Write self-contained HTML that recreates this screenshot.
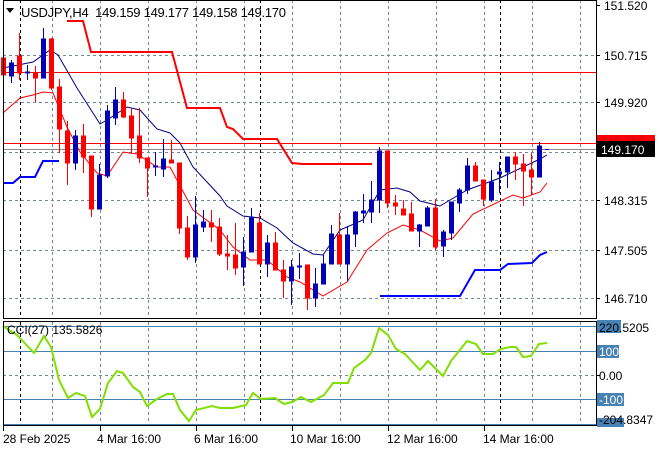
<!DOCTYPE html>
<html><head><meta charset="utf-8"><style>
html,body{margin:0;padding:0;background:#fff;}
svg{display:block;font-family:"Liberation Sans",sans-serif;}
</style></head><body>
<svg width="660" height="450" viewBox="0 0 660 450" xmlns="http://www.w3.org/2000/svg">
<rect width="660" height="450" fill="#fff"/>
<g stroke="#778899" stroke-dasharray="3,3" stroke-width="1">
<line x1="3" y1="55.5" x2="596" y2="55.5"/><line x1="3" y1="102.5" x2="596" y2="102.5"/>
<line x1="3" y1="152.5" x2="596" y2="152.5"/><line x1="3" y1="200.5" x2="596" y2="200.5"/>
<line x1="3" y1="250.5" x2="596" y2="250.5"/><line x1="3" y1="298.5" x2="596" y2="298.5"/>
<line x1="3" y1="375.5" x2="596" y2="375.5"/>
<line x1="52.5" y1="0" x2="52.5" y2="318"/><line x1="100.5" y1="0" x2="100.5" y2="318"/>
<line x1="148.5" y1="0" x2="148.5" y2="318"/><line x1="196.5" y1="0" x2="196.5" y2="318"/>
<line x1="244.5" y1="0" x2="244.5" y2="318"/><line x1="292.5" y1="0" x2="292.5" y2="318"/>
<line x1="340.5" y1="0" x2="340.5" y2="318"/><line x1="388.5" y1="0" x2="388.5" y2="318"/>
<line x1="436.5" y1="0" x2="436.5" y2="318"/><line x1="484.5" y1="0" x2="484.5" y2="318"/>
<line x1="532.5" y1="0" x2="532.5" y2="318"/><line x1="580.5" y1="0" x2="580.5" y2="318"/>
<line x1="52.5" y1="322" x2="52.5" y2="426"/><line x1="100.5" y1="322" x2="100.5" y2="426"/>
<line x1="148.5" y1="322" x2="148.5" y2="426"/><line x1="196.5" y1="322" x2="196.5" y2="426"/>
<line x1="244.5" y1="322" x2="244.5" y2="426"/><line x1="292.5" y1="322" x2="292.5" y2="426"/>
<line x1="340.5" y1="322" x2="340.5" y2="426"/><line x1="388.5" y1="322" x2="388.5" y2="426"/>
<line x1="436.5" y1="322" x2="436.5" y2="426"/><line x1="484.5" y1="322" x2="484.5" y2="426"/>
<line x1="532.5" y1="322" x2="532.5" y2="426"/><line x1="580.5" y1="322" x2="580.5" y2="426"/>
</g>
<g stroke="#000" stroke-dasharray="3,3">
<line x1="20.5" y1="0" x2="20.5" y2="318"/><line x1="260.5" y1="0" x2="260.5" y2="318"/><line x1="500.5" y1="0" x2="500.5" y2="318"/>
<line x1="20.5" y1="322" x2="20.5" y2="426"/><line x1="260.5" y1="322" x2="260.5" y2="426"/><line x1="500.5" y1="322" x2="500.5" y2="426"/>
</g>
<line x1="3" y1="72.5" x2="596" y2="72.5" stroke="#f00"/>
<line x1="3" y1="143.5" x2="596" y2="143.5" stroke="#f00"/>
<line x1="3" y1="149.5" x2="596" y2="149.5" stroke="#8c8c8c"/>
<polyline fill="none" stroke="#f00" stroke-width="2" points="67,21 83,21 91,52 172,52 187,108 220,108 227,127 233,129 243,139 277,139 292,163 302,164 372,164"/>
<polyline fill="none" stroke="#00f" stroke-width="2" points="3,183 13,183 20,177 35,177 43,161 59,161"/>
<polyline fill="none" stroke="#00f" stroke-width="2" points="380,296 460,296 475,270 500,270 508,264 532,263 540,255 547,252"/>
<polyline fill="none" stroke="#000080" points="3,68 33,62 50,50 58,55 77,88 100,124 107,120 127,107 140,110 157,129 170,133 180,143 193,167 220,196 227,206 243,216 260,218 277,228 293,243 313,254 323,255 340,230 363,220 380,190 397,188 410,192 420,201 440,206 467,190 500,178 540,159 547,155"/>
<polyline fill="none" stroke="#f00" points="3,113 20,98 33,95 43,92 53,93 67,127 80,152 97,173 107,176 123,152 137,154 157,167 170,167 193,210 220,230 233,247 250,260 267,260 287,277 300,282 323,296 347,282 367,250 387,233 403,225 420,230 440,241 453,238 473,214 513,195 523,198 540,192 547,183"/>
<g fill="#f00" stroke="#f00">
<line x1="3.5" y1="45" x2="3.5" y2="85"/><rect x="1.5" y="58" width="4" height="17"/>
<line x1="19.5" y1="33" x2="19.5" y2="80"/><rect x="17.5" y="56" width="4" height="17"/>
<line x1="35.5" y1="66" x2="35.5" y2="102"/><rect x="33.5" y="73" width="4" height="5"/>
<line x1="51.5" y1="38" x2="51.5" y2="90"/><rect x="49.5" y="39" width="4" height="49"/>
<line x1="59.5" y1="79" x2="59.5" y2="153"/><rect x="57.5" y="87" width="4" height="42"/>
<line x1="67.5" y1="121" x2="67.5" y2="185"/><rect x="65.5" y="131" width="4" height="32"/>
<line x1="83.5" y1="124" x2="83.5" y2="173"/><rect x="81.5" y="136" width="4" height="21"/>
<line x1="91.5" y1="156" x2="91.5" y2="217"/><rect x="89.5" y="156" width="4" height="53"/>
<line x1="123.5" y1="92" x2="123.5" y2="118"/><rect x="121.5" y="100" width="4" height="17"/>
<line x1="131.5" y1="108" x2="131.5" y2="153"/><rect x="129.5" y="116" width="4" height="22"/>
<line x1="139.5" y1="108" x2="139.5" y2="163"/><rect x="137.5" y="136" width="4" height="22"/>
<line x1="147.5" y1="158" x2="147.5" y2="197"/><rect x="145.5" y="158" width="4" height="10"/>
<line x1="171.5" y1="140" x2="171.5" y2="163"/><rect x="169.5" y="160" width="4" height="3"/>
<line x1="179.5" y1="163" x2="179.5" y2="234"/><rect x="177.5" y="163" width="4" height="65"/>
<line x1="187.5" y1="216" x2="187.5" y2="260"/><rect x="185.5" y="228" width="4" height="29"/>
<line x1="211.5" y1="210" x2="211.5" y2="242"/><rect x="209.5" y="223" width="4" height="4"/>
<line x1="219.5" y1="218" x2="219.5" y2="256"/><rect x="217.5" y="227" width="4" height="27"/>
<line x1="227.5" y1="235" x2="227.5" y2="270"/><rect x="225.5" y="254" width="4" height="2"/>
<line x1="235.5" y1="223" x2="235.5" y2="275"/><rect x="233.5" y="255" width="4" height="13"/>
<line x1="259.5" y1="213" x2="259.5" y2="264"/><rect x="257.5" y="223" width="4" height="41"/>
<line x1="275.5" y1="232" x2="275.5" y2="270"/><rect x="273.5" y="243" width="4" height="27"/>
<line x1="283.5" y1="260" x2="283.5" y2="298"/><rect x="281.5" y="270" width="4" height="11"/>
<line x1="307.5" y1="265" x2="307.5" y2="310"/><rect x="305.5" y="265" width="4" height="33"/>
<line x1="339.5" y1="213" x2="339.5" y2="264"/><rect x="337.5" y="235" width="4" height="29"/>
<line x1="387.5" y1="151" x2="387.5" y2="208"/><rect x="385.5" y="151" width="4" height="52"/>
<line x1="395.5" y1="195" x2="395.5" y2="215"/><rect x="393.5" y="203" width="4" height="3"/>
<line x1="403.5" y1="200" x2="403.5" y2="215"/><rect x="401.5" y="209" width="4" height="6"/>
<line x1="411.5" y1="202" x2="411.5" y2="231"/><rect x="409.5" y="214" width="4" height="17"/>
<line x1="435.5" y1="199" x2="435.5" y2="250"/><rect x="433.5" y="208" width="4" height="39"/>
<line x1="475.5" y1="162" x2="475.5" y2="181"/><rect x="473.5" y="166" width="4" height="15"/>
<line x1="483.5" y1="180" x2="483.5" y2="206"/><rect x="481.5" y="180" width="4" height="19"/>
<line x1="515.5" y1="152" x2="515.5" y2="180"/><rect x="513.5" y="157" width="4" height="7"/>
<line x1="523.5" y1="154" x2="523.5" y2="206"/><rect x="521.5" y="164" width="4" height="7"/>
<line x1="531.5" y1="153" x2="531.5" y2="195"/><rect x="529.5" y="170" width="4" height="7"/>
</g>
<g fill="#0000b4" stroke="#0000b4">
<line x1="11.5" y1="60" x2="11.5" y2="83"/><rect x="9.5" y="63" width="4" height="13"/>
<line x1="27.5" y1="65" x2="27.5" y2="80"/><rect x="25.5" y="72" width="4" height="1"/>
<line x1="43.5" y1="28" x2="43.5" y2="78"/><rect x="41.5" y="39" width="4" height="39"/>
<line x1="75.5" y1="130" x2="75.5" y2="170"/><rect x="73.5" y="136" width="4" height="27"/>
<line x1="99.5" y1="164" x2="99.5" y2="209"/><rect x="97.5" y="175" width="4" height="34"/>
<line x1="107.5" y1="105" x2="107.5" y2="178"/><rect x="105.5" y="111" width="4" height="65"/>
<line x1="115.5" y1="87" x2="115.5" y2="125"/><rect x="113.5" y="100" width="4" height="18"/>
<line x1="155.5" y1="152" x2="155.5" y2="176"/><rect x="153.5" y="166" width="4" height="1"/>
<line x1="163.5" y1="139" x2="163.5" y2="177"/><rect x="161.5" y="159" width="4" height="10"/>
<line x1="195.5" y1="196" x2="195.5" y2="263"/><rect x="193.5" y="225" width="4" height="32"/>
<line x1="203.5" y1="210" x2="203.5" y2="232"/><rect x="201.5" y="222" width="4" height="5"/>
<line x1="243.5" y1="237" x2="243.5" y2="286"/><rect x="241.5" y="252" width="4" height="15"/>
<line x1="251.5" y1="208" x2="251.5" y2="252"/><rect x="249.5" y="218" width="4" height="34"/>
<line x1="267.5" y1="235" x2="267.5" y2="277"/><rect x="265.5" y="243" width="4" height="21"/>
<line x1="291.5" y1="260" x2="291.5" y2="305"/><rect x="289.5" y="267" width="4" height="14"/>
<line x1="299.5" y1="253" x2="299.5" y2="279"/><rect x="297.5" y="266" width="4" height="1"/>
<line x1="315.5" y1="268" x2="315.5" y2="307"/><rect x="313.5" y="284" width="4" height="14"/>
<line x1="323.5" y1="255" x2="323.5" y2="284"/><rect x="321.5" y="264" width="4" height="20"/>
<line x1="331.5" y1="225" x2="331.5" y2="264"/><rect x="329.5" y="234" width="4" height="30"/>
<line x1="347.5" y1="226" x2="347.5" y2="281"/><rect x="345.5" y="235" width="4" height="29"/>
<line x1="355.5" y1="211" x2="355.5" y2="247"/><rect x="353.5" y="212" width="4" height="22"/>
<line x1="363.5" y1="194" x2="363.5" y2="223"/><rect x="361.5" y="211" width="4" height="2"/>
<line x1="371.5" y1="181" x2="371.5" y2="223"/><rect x="369.5" y="200" width="4" height="12"/>
<line x1="379.5" y1="147" x2="379.5" y2="213"/><rect x="377.5" y="151" width="4" height="49"/>
<line x1="419.5" y1="224" x2="419.5" y2="247"/><rect x="417.5" y="225" width="4" height="6"/>
<line x1="427.5" y1="206" x2="427.5" y2="226"/><rect x="425.5" y="208" width="4" height="18"/>
<line x1="443.5" y1="230" x2="443.5" y2="257"/><rect x="441.5" y="232" width="4" height="14"/>
<line x1="451.5" y1="202" x2="451.5" y2="240"/><rect x="449.5" y="202" width="4" height="31"/>
<line x1="459.5" y1="188" x2="459.5" y2="212"/><rect x="457.5" y="190" width="4" height="13"/>
<line x1="467.5" y1="158" x2="467.5" y2="194"/><rect x="465.5" y="166" width="4" height="24"/>
<line x1="491.5" y1="170" x2="491.5" y2="202"/><rect x="489.5" y="182" width="4" height="18"/>
<line x1="499.5" y1="162" x2="499.5" y2="193"/><rect x="497.5" y="172" width="4" height="2"/>
<line x1="507.5" y1="157" x2="507.5" y2="188"/><rect x="505.5" y="157" width="4" height="15"/>
<line x1="539.5" y1="142" x2="539.5" y2="177"/><rect x="537.5" y="146" width="4" height="31"/>
<line x1="545" y1="149.5" x2="549" y2="149.5"/>
</g>
<g stroke="#4682b4">
<line x1="3" y1="326.5" x2="596" y2="326.5"/><line x1="3" y1="351.5" x2="596" y2="351.5"/>
<line x1="3" y1="399.5" x2="596" y2="399.5"/><line x1="3" y1="424.5" x2="596" y2="424.5"/>
</g>
<polyline fill="none" stroke="#7fe000" stroke-width="2" points="3,326 17,335 34,353 44,336 51,347 59,380 68,398 76,393 85,396 92,417 100,409 108,383 117,371 123,373 133,387 140,392 147,406 157,399 167,394 173,394 180,410 189,421 196,410 212,406 220,408 233,408 246,405 253,393 261,399 275,398 284,404 292,402 301,397 311,402 324,395 333,383 348,383 354,368 365,360 371,353 379,328 388,335 396,349 405,354 420,370 428,361 443,376 451,361 467,341 476,344 483,354 493,354 501,349 510,347 516,347 523,357 531,356 539,344 547,343"/>
<g fill="none" stroke="#000">
<rect x="3.5" y="0.5" width="593" height="318"/>
<rect x="3.5" y="321.5" width="593" height="104"/>
</g>
<g stroke="#000">
<line x1="596" y1="5.5" x2="600" y2="5.5"/><line x1="596" y1="55.5" x2="600" y2="55.5"/><line x1="596" y1="102.5" x2="600" y2="102.5"/>
<line x1="596" y1="200.5" x2="600" y2="200.5"/><line x1="596" y1="250.5" x2="600" y2="250.5"/><line x1="596" y1="298.5" x2="600" y2="298.5"/>
<line x1="596" y1="375.5" x2="600" y2="375.5"/>
<line x1="3.5" y1="426" x2="3.5" y2="431"/><line x1="100.5" y1="426" x2="100.5" y2="431"/><line x1="196.5" y1="426" x2="196.5" y2="431"/>
<line x1="292.5" y1="426" x2="292.5" y2="431"/><line x1="388.5" y1="426" x2="388.5" y2="431"/><line x1="484.5" y1="426" x2="484.5" y2="431"/>
</g>
<g font-size="12" fill="#000">
<text x="604" y="10">151.520</text>
<text x="604" y="60">150.715</text>
<text x="604" y="107">149.920</text>
<text x="604" y="205">148.315</text>
<text x="604" y="255">147.505</text>
<text x="604" y="303">146.710</text>
</g>
<rect x="597" y="135" width="58" height="10" fill="#f00"/>
<text x="601" y="145" font-size="12" fill="#c00">149.250</text>
<rect x="597" y="141" width="58" height="16" fill="#000"/>
<text x="601" y="154" font-size="12" fill="#fff">149.170</text>
<rect x="597" y="320" width="24" height="13" fill="#4682b4"/>
<rect x="597" y="345" width="22" height="13" fill="#4682b4"/>
<rect x="597" y="393" width="27" height="13" fill="#4682b4"/>
<rect x="597" y="418" width="27" height="9" fill="#4682b4"/>
<g font-size="12" fill="#000">
<text x="599" y="332">220.5205</text>
<text x="599" y="356" fill="#fff">100</text>
<text x="599" y="380">0.00</text>
<text x="599" y="404" fill="#fff">-100</text>
<text x="599" y="424">-204.8347</text>
</g>
<path d="M6 8 L14 8 L10 13 Z" fill="#000"/>
<text x="21" y="17" font-size="13" fill="#000" textLength="265" lengthAdjust="spacing" xml:space="preserve">USDJPY,H4  149.159 149.177 149.158 149.170</text>
<text x="7" y="334" font-size="12" fill="#000">CCI(27) 135.5826</text>
<g font-size="12" fill="#000">
<text x="3" y="443">28 Feb 2025</text>
<text x="97" y="443">4 Mar 16:00</text>
<text x="194" y="443">6 Mar 16:00</text>
<text x="290" y="443">10 Mar 16:00</text>
<text x="387" y="443">12 Mar 16:00</text>
<text x="483" y="443">14 Mar 16:00</text>
</g>
</svg>
</body></html>
